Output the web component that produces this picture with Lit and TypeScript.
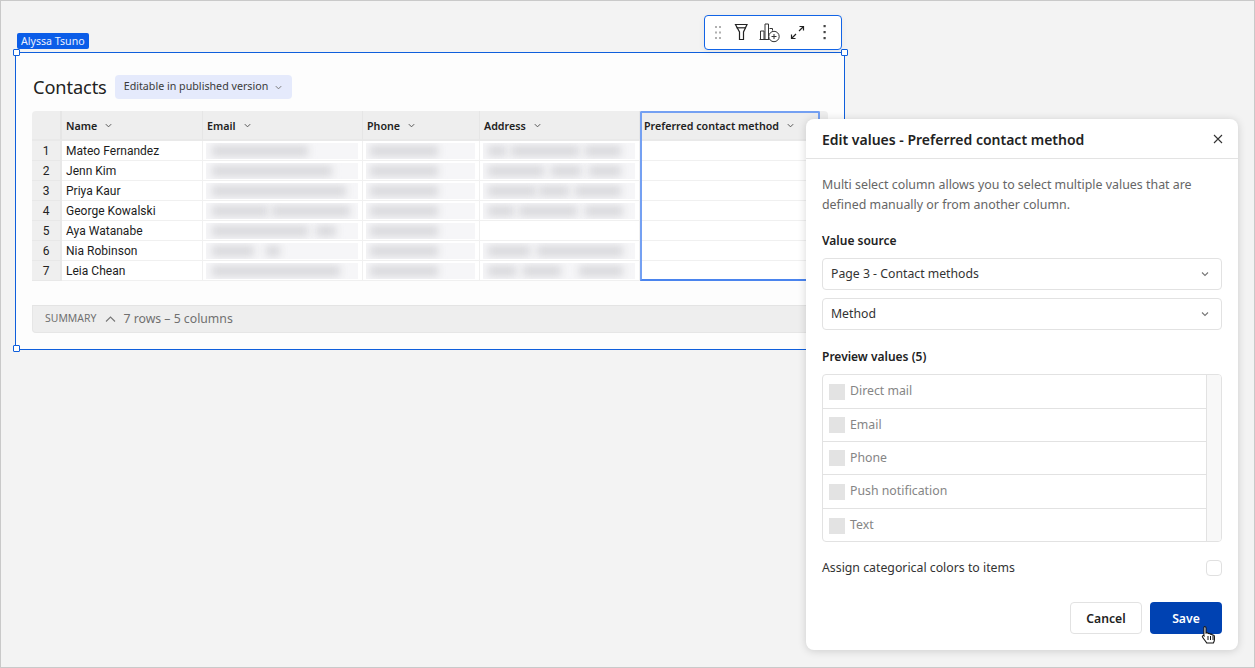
import { LitElement, html, css, svg } from "lit";
import { customElement } from "lit/decorators.js";

const chevron = (c: string, s = 10) => html`<svg class="chev" width=${s} height=${s} viewBox="0 0 10 10" fill="none" stroke=${c} stroke-width="1.1"><path d="M2 3.5 5 6.5 8 3.5"/></svg>`;

type Row = { n: number; name: string; email: number[][]; phone: number[][]; addr: number[][] };
const ph = [[4, 68]];
const rows: Row[] = [
  { n: 1, name: "Mateo Fernandez", email: [[6, 96]], phone: ph, addr: [[5, 18], [28, 68], [102, 36]] },
  { n: 2, name: "Jenn Kim", email: [[6, 120]], phone: ph, addr: [[5, 56], [68, 30], [106, 32]] },
  { n: 3, name: "Priya Kaur", email: [[6, 134]], phone: ph, addr: [[5, 48], [56, 30], [92, 46]] },
  { n: 4, name: "George Kowalski", email: [[6, 56], [66, 78]], phone: ph, addr: [[5, 26], [36, 58], [102, 38]] },
  { n: 5, name: "Aya Watanabe", email: [[6, 96], [110, 20]], phone: ph, addr: [] },
  { n: 6, name: "Nia Robinson", email: [[6, 42], [60, 14]], phone: ph, addr: [[5, 42], [54, 86]] },
  { n: 7, name: "Leia Chean", email: [[6, 128]], phone: ph, addr: [[5, 28], [40, 38], [96, 44]] },
];

@customElement("blur-cell")
class BlurCell extends LitElement {
  static properties = { segs: { attribute: false } };
  segs: number[][] = [];
  static styles = css`
    :host { display: block; height: 100%; box-sizing: border-box; padding: 2px 4px 1px 3px; }
    .wash { height: 100%; background: #f6f6f8; position: relative; overflow: hidden; }
    .seg { position: absolute; top: 3px; height: 10px; background: #d6d6da; filter: blur(4px); }
  `;
  render() {
    if (!this.segs.length) return html``;
    return html`<div class="wash">${this.segs.map(([l, w]) => html`<div class="seg" style="left:${l}px;width:${w}px"></div>`)}</div>`;
  }
}

@customElement("app-root")
class AppRoot extends LitElement {
  static styles = css`
    :host { display: block; font-family: "Noto Sans", sans-serif; color: #1f1f1f; }
    * { box-sizing: border-box; }
    .page { position: relative; width: 1255px; height: 668px; background: #f3f3f3; border: 1px solid #c9c9c9; padding: 51px 0 0 14px; overflow: hidden; }
    .card { width: 830px; height: 298px; background: #fdfdfd; border: 1px solid #0f5fdc; padding: 22px 16px 0 16px; }
    .title { display: flex; align-items: center; gap: 8px; height: 24px; padding-left: 1px; }
    .title h1 { margin: 0; font-size: 18.2px; font-weight: 400; line-height: 24px; color: #222; letter-spacing: -0.1px; }
    .pill { display: flex; align-items: center; gap: 3px; height: 24px; width: 177px; padding: 0 0 2px 9px; background: #e5eafc; border-radius: 4px; font-size: 10.7px; color: #3a3a3a; white-space: nowrap; }
    .pill .chev { margin: 2px 0 0 3px; }

    .grid { margin-top: 12px; width: 796px; display: grid; grid-template-columns: 30px 141px 160px 117px 160px 180px 8px; grid-template-rows: 30px repeat(7, 20px); position: relative; border-radius: 4px 4px 0 0; overflow: hidden; }
    .hd { background: #eeeeee; border-right: 1px solid #e6e6e6; border-bottom: 2px solid #e9e9e9; display: flex; align-items: center; gap: 7px; padding: 1px 0 0 4px; font-size: 10.7px; font-weight: 600; color: #222; white-space: nowrap; }
    .hd.blank { border-right: 2px solid #e6e6e6; }
    .hd.last { border-right: 0; }
    .num { background: #efefef; border-right: 2px solid #e8e8e8; border-bottom: 1px solid #e8e8e8; font: 400 12px "Roboto", sans-serif; color: #222; display: flex; align-items: center; justify-content: center; padding-top: 1px; }
    .c { background: #fff; border-right: 1px solid #f0f0f0; border-bottom: 1px solid #f0f0f0; font: 400 12px "Roboto", sans-serif; letter-spacing: 0.02px; color: #1c1c1c; padding: 1px 0 0 4px; display: flex; align-items: center; white-space: nowrap; min-width: 0; }
    .c.blurred { display: block; padding: 0; }
    .c.end { border-right: 0; }
    .selected { position: absolute; left: 608px; top: 0; width: 180px; height: 170px; border: 2px solid #74a0f2; border-bottom-color: #4a84ee; pointer-events: none; border-radius: 2px 2px 0 0; }

    .summary { margin-top: 24px; width: 796px; height: 28px; background: #eeeeee; border: 1px solid #e6e6e6; border-top-color: #e4e4e4; border-radius: 0 0 4px 4px; display: flex; align-items: center; padding: 0 0 2px 12px; color: #707070; white-space: nowrap; }
    .summary .s1 { font-size: 10.4px; letter-spacing: 0.05px; }
    .summary svg { margin: 2px 7px 0 9px; }
    .summary .s2 { font-size: 12.25px; }

    .who { position: absolute; left: 16px; top: 32px; width: 72px; height: 16px; background: #0b5de8; color: #e9f0ff; border-radius: 2px; font-size: 10.6px; line-height: 16px; padding-left: 4px; white-space: nowrap; }
    .handle { position: absolute; width: 7px; height: 7px; background: #fff; border: 1px solid #0f5fdc; border-radius: 1px; }

    .tools { position: absolute; left: 703px; top: 14px; width: 138px; height: 35px; background: #fff; border: 1.5px solid #1264e6; border-radius: 4px; display: flex; align-items: center; box-shadow: 0 2px 6px rgba(0,0,0,0.06); }
    .tools svg { position: absolute; }

    .dialog { position: absolute; left: 805px; top: 118px; width: 432px; height: 531px; background: #fff; border-radius: 8px; box-shadow: 0 1px 8px rgba(0,0,0,0.16); display: flex; flex-direction: column; }
    .dh { height: 40px; flex: none; border-bottom: 1px solid #e3e3e3; padding: 0 14px 0 16px; display: flex; align-items: center; justify-content: space-between; }
    .dh h2 { margin: 2px 0 0; font-size: 14px; font-weight: 600; color: #222; white-space: nowrap; }
    .db { padding: 16px 16px 0; display: flex; flex-direction: column; flex: 1; }
    .desc { margin: 0; font-size: 12.4px; line-height: 20px; color: #666; width: 400px; }
    .lbl { font-size: 12px; font-weight: 600; color: #222; line-height: 16px; }
    .select { height: 32px; border: 1px solid #e2e2e2; border-radius: 4px; padding: 0 11px 2px 8px; display: flex; align-items: center; justify-content: space-between; font-size: 12.25px; color: #333; }
    .select .chev { margin-top: 2px; }
    .list { margin-top: 9px; height: 168px; border: 1px solid #e2e2e2; border-radius: 4px; display: flex; overflow: hidden; }
    .items { flex: 1; display: flex; flex-direction: column; }
    .item { flex: 0 0 33px; display: flex; align-items: center; gap: 5px; padding-left: 6px; font-size: 12.3px; color: #858585; border-bottom: 1px solid #e2e2e2; }
    .item:nth-child(1), .item:nth-child(4) { flex-basis: 34px; }
    .item:last-child { border-bottom: 0; }
    .item span.t { margin-top: -2px; }
    .box { width: 16px; height: 16px; background: #e3e3e3; flex: none; }
    .scroll { width: 15px; background: #f8f8f8; border-left: 1px solid #e2e2e2; }
    .assign { margin-top: 17px; height: 18px; display: flex; align-items: center; justify-content: space-between; font-size: 12.3px; color: #333; }
    .assign span:first-child { margin-top: -2px; }
    .cb { width: 16px; height: 16px; border: 1px solid #e0e0e0; border-radius: 4px; background: #fff; }
    .btns { margin-top: 25px; display: flex; justify-content: flex-end; gap: 8px; }
    .btn { width: 72px; height: 32px; border-radius: 4px; font-size: 12.2px; font-weight: 600; display: flex; align-items: center; justify-content: center; }
    .btn.cancel { border: 1px solid #e2e2e2; color: #222; background: #fff; }
    .btn.save { background: #0042b2; color: #fff; }
    .cursor { position: absolute; left: 1200px; top: 624px; }
  `;

  render() {
    const heads = ["Name", "Email", "Phone", "Address", "Preferred contact method"];
    return html`
      <div class="page">
        <div class="card">
          <div class="title">
            <h1>Contacts</h1>
            <div class="pill">Editable in published version ${chevron("#777", 9)}</div>
          </div>
          <div class="grid">
            <div class="hd blank"></div>
            ${heads.map((h) => html`<div class="hd">${h} ${chevron("#555", 9)}</div>`)}
            <div class="hd last"></div>
            ${rows.map((r) => html`
              <div class="num">${r.n}</div>
              <div class="c">${r.name}</div>
              <div class="c blurred"><blur-cell .segs=${r.email}></blur-cell></div>
              <div class="c blurred"><blur-cell .segs=${r.phone}></blur-cell></div>
              <div class="c blurred"><blur-cell .segs=${r.addr}></blur-cell></div>
              <div class="c"></div>
              <div class="c end"></div>
            `)}
            <div class="selected"></div>
          </div>
          <div class="summary">
            <span class="s1">SUMMARY</span>
            <svg width="11" height="8" viewBox="0 0 11 8" fill="none" stroke="#777" stroke-width="1.1"><path d="M1 6.5 5.5 2 10 6.5"/></svg>
            <span class="s2">7 rows – 5 columns</span>
          </div>
        </div>

        <div class="who">Alyssa Tsuno</div>
        <div class="handle" style="left:12px;top:48px"></div>
        <div class="handle" style="left:840px;top:48px"></div>
        <div class="handle" style="left:12px;top:344px"></div>

        <div class="tools">
          <svg style="left:8.500px;top:8.500px" width="10" height="16" viewBox="0 0 10 16" fill="#b0b0b0">
            ${[1, 6.5, 12].map((y) => svg`<rect x="1" y=${y} width="2" height="2"/><rect x="5" y=${y} width="2" height="2"/>`)}
          </svg>
          <svg style="left:29px;top:7px" width="16" height="18" viewBox="0 0 16 18" fill="none" stroke="#222" stroke-width="1.2">
            <path d="M1.500 1.500h11.500L9.500 9v7.500h-4V9z"/><path d="M2.500 4.800h9.500"/>
          </svg>
          <svg style="left:54px;top:6px" width="24" height="22" viewBox="0 0 24 22" fill="none" stroke="#333" stroke-width="1">
            <path d="M1.500 17.500v-8.500h3.500v8.500M6 17.500v-15.500h3.500v15.500M10.500 6.500h3v2M.5 17.500h10"/>
            <circle cx="15" cy="14.500" r="5.200" fill="#fff"/><path d="M12.500 14.500h5M15 12v5"/>
          </svg>
          <svg style="left:85px;top:9px" width="15" height="15" viewBox="0 0 15 15" fill="none" stroke="#222" stroke-width="1.200">
            <path d="M9 6 13.500 1.500M9.500 1.500h4v4M6 9 1.500 13.500M1.500 9.500v4h4"/>
          </svg>
          <svg style="left:118px;top:8px" width="4" height="16" viewBox="0 0 4 16" fill="#444">
            <rect x="0.500" y="1" width="2.200" height="2.200"/><rect x="0.500" y="7" width="2.200" height="2.200"/><rect x="0.500" y="13" width="2.200" height="2.200"/>
          </svg>
        </div>

        <div class="dialog">
          <div class="dh">
            <h2>Edit values - Preferred contact method</h2>
            <svg width="12" height="12" viewBox="0 0 12 12" fill="none" stroke="#333" stroke-width="1.100"><path d="M2 2l8 8M10 2l-8 8"/></svg>
          </div>
          <div class="db">
            <p class="desc">Multi select column allows you to select multiple values that are defined manually or from another column.</p>
            <div class="lbl" style="margin-top:18px">Value source</div>
            <div class="select" style="margin-top:9px">Page 3 - Contact methods ${chevron("#777", 10)}</div>
            <div class="select" style="margin-top:8px">Method ${chevron("#777", 10)}</div>
            <div class="lbl" style="margin-top:19px">Preview values (5)</div>
            <div class="list">
              <div class="items">
                ${["Direct mail", "Email", "Phone", "Push notification", "Text"].map((t) => html`<div class="item"><span class="box"></span><span class="t">${t}</span></div>`)}
              </div>
              <div class="scroll"></div>
            </div>
            <div class="assign"><span>Assign categorical colors to items</span><span class="cb"></span></div>
            <div class="btns">
              <div class="btn cancel">Cancel</div>
              <div class="btn save">Save</div>
            </div>
          </div>
        </div>

        <svg class="cursor" width="16" height="20" viewBox="0 0 16 20">
          <path d="M3.500 1.500c1 0 1.500.7 1.500 1.600v5l1-.3c.8 0 1.200.4 1.400.8.900-.3 1.700 0 2 .6.900-.2 1.700.1 2 .8.900-.2 2 .4 2 1.600v3.200c0 1.500-.5 2.300-1 3.200H5.700c-1-1.800-3-4-4.200-6-.5-.9.400-1.800 1.500-1.200l-.1-.3V3.100c0-.9.500-1.600.6-1.600z" fill="#fff" stroke="#111" stroke-width="1.100"/>
          <path d="M7 11v4M9.500 11v4M12 11v4" stroke="#111" stroke-width="1"/>
        </svg>
      </div>
    `;
  }
}
